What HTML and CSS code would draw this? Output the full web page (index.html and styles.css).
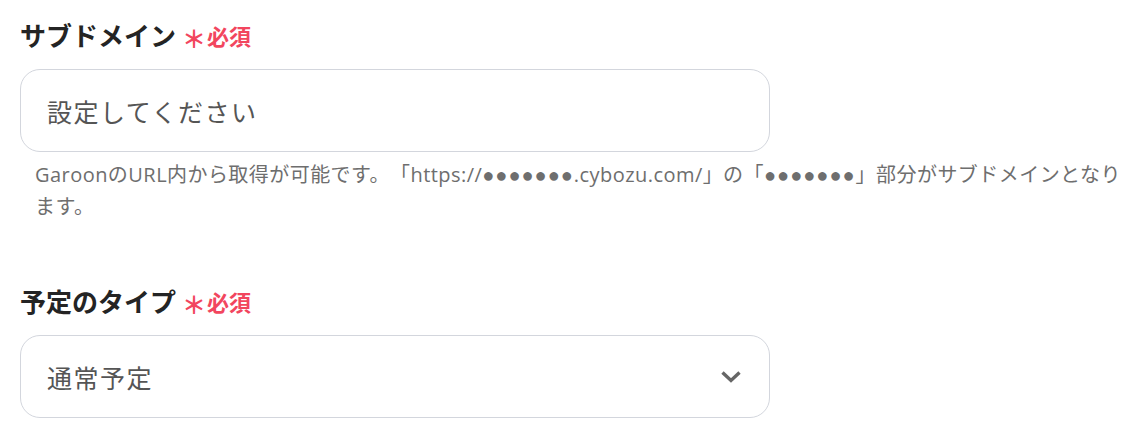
FILE: index.html
```html
<!DOCTYPE html>
<html lang="ja">
<head>
<meta charset="utf-8">
<link rel="stylesheet" href="styles.css">
</head>
<body>
<div class="form">
  <div class="field">
    <div class="label">サブドメイン<span class="req"><span class="ast">＊</span>必須</span></div>
    <div class="input placeholder">設定してください</div>
    <p class="help">GaroonのURL内から取得が可能です。「https://<span class="dots">●●●●●●●</span>.cybozu.com/」の「<span class="dots">●●●●●●●</span>」部分がサブドメインとなります。</p>
  </div>
  <div class="field">
    <div class="label">予定のタイプ<span class="req"><span class="ast">＊</span>必須</span></div>
    <div class="input select">
      <span class="value">通常予定</span>
      <svg class="chev" width="22" height="14" viewBox="0 0 22 14"><path d="M2.5 2.5 L11 10.5 L19.5 2.5" fill="none" stroke="#666" stroke-width="3.4"/></svg>
    </div>
  </div>
</div>
</body>
</html>
```
FILE: styles.css
```css
* { box-sizing: border-box; }
html, body { margin: 0; padding: 0; background: #fff; }
body {
  font-family: "Open Sans", "Noto Sans CJK JP", sans-serif;
  color: #222;
}
.form {
  padding: 18px 6px 0 20px;
  display: flex;
  flex-direction: column;
  gap: 62px;
}
.field { display: flex; flex-direction: column; }
.label {
  font-family: "Noto Sans CJK JP", sans-serif;
  font-weight: 700;
  font-size: 26px;
  line-height: 34px;
  color: #242424;
  display: flex;
  align-items: center;
}
.req {
  font-size: 22px;
  color: #f2465e;
  margin-left: 6px;
  display: flex;
  align-items: center;
}
.ast { font-size: 24px; margin-right: 1px; position: relative; top: 3px; }
.input {
  margin-top: 17px;
  width: 750px;
  height: 83px;
  border: 1px solid #d3d6dd;
  border-radius: 20px;
  padding: 0 26px;
  display: flex;
  align-items: center;
  font-family: "Noto Sans CJK JP", sans-serif;
  font-size: 25px;
  letter-spacing: 1.5px;
  color: #555;
}
.select { justify-content: space-between; }
.chev { margin-right: 1px; }
.help {
  margin: 7px 0 0 0;
  padding-left: 15px;
  font-size: 20px;
  letter-spacing: 0.45px;
  line-height: 31px;
  color: #6e6e6e;
  text-spacing-trim: space-all;
}
.dots { font-family: "Liberation Sans", sans-serif; letter-spacing: 1px; }
```
